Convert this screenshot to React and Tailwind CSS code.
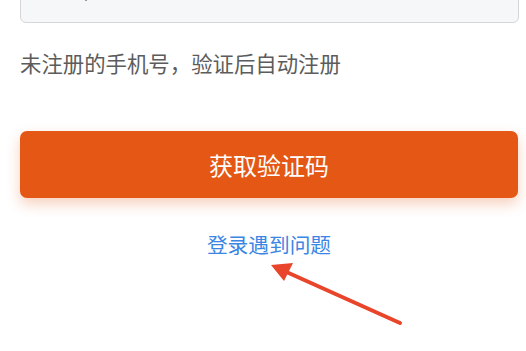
import React from 'react';

const FONT = '[font-family:"Noto_Sans_CJK_SC","Noto_Sans",sans-serif]';

function Arrow() {
  return (
    <svg
      className="pointer-events-none absolute left-0 top-0"
      width="526"
      height="351"
      viewBox="0 0 526 351"
    >
      <line x1="400" y1="323" x2="282" y2="270" stroke="#e8452b" strokeWidth="4" strokeLinecap="round" />
      <polygon points="271,265 293,263 284,281" fill="#e8452b" />
    </svg>
  );
}

export default function App() {
  return (
    <div className={`relative h-[351px] w-[526px] overflow-hidden bg-white ${FONT}`}>
      <div className="flex flex-col pl-[20px] pr-[8px]">
        {/* phone input, scrolled mostly out of view */}
        <div className="relative -mt-[33px] h-[56px] w-[499px] rounded-[6px] border border-[#d4d6d9] bg-[#f6f7f9]">
          <span className="absolute left-[64px] top-[30px] h-[3px] w-[2px] bg-[#9a9a9a]"></span>
        </div>

        <p className="mt-[26px] text-[21.4px] leading-[28px] text-[#5c5c5c]">
          未注册的手机号，验证后自动注册
        </p>

        <button className="mt-[54px] h-[67px] w-[498px] rounded-[7px] bg-[#e45715] text-[24px] text-white shadow-[0_6px_14px_rgba(228,87,21,0.28)]">
          获取验证码
        </button>

        <a className="mt-[32px] self-center text-[20.7px] leading-[28px] text-[#3b86e3]">
          登录遇到问题
        </a>
      </div>
      <Arrow />
    </div>
  );
}
